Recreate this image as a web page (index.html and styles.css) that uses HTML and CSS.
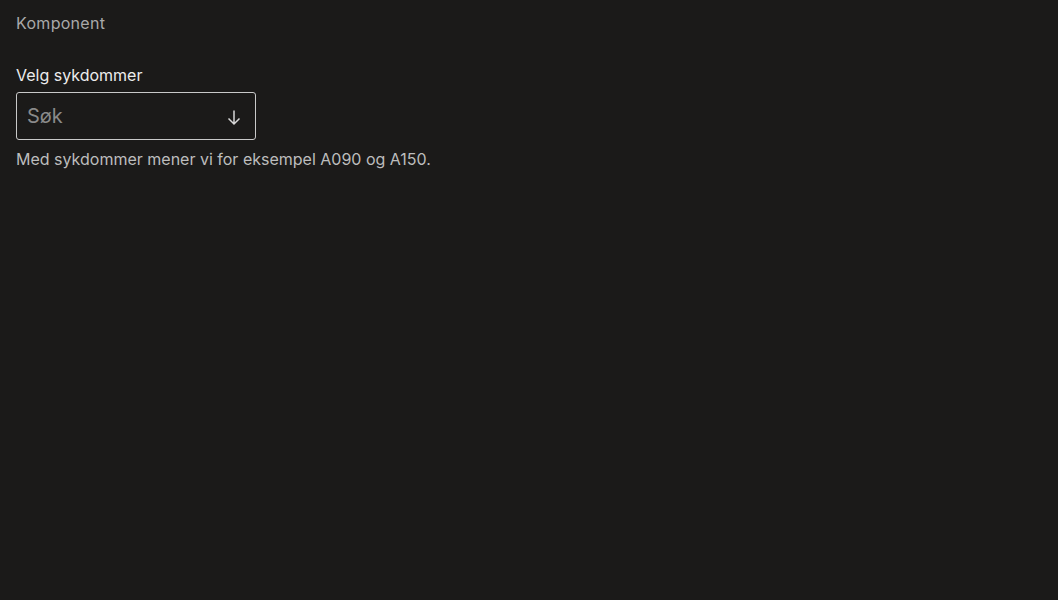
FILE: index.html
```html
<!DOCTYPE html>
<html lang="no">
<head>
<meta charset="utf-8">
<link rel="stylesheet" href="styles.css">
</head>
<body>
<main class="page">
  <div class="title">Komponent</div>
  <div class="field">
    <label class="label" for="sok">Velg sykdommer</label>
    <div class="combo">
      <input id="sok" class="input" type="text" placeholder="Søk">
      <svg class="arrow" width="18" height="18" viewBox="0 0 18 18" fill="none" stroke="currentColor" stroke-width="1.5">
        <path d="M9 2.5V16M3.5 10.5L9 16L14.5 10.5"/>
      </svg>
    </div>
    <div class="help">Med sykdommer mener vi for eksempel A090 og A150.</div>
  </div>
</main>
</body>
</html>
```
FILE: styles.css
```css
html, body {
  margin: 0;
  background: #1b1a19;
  height: 100%;
}
body {
  font-family: Inter, "Liberation Sans", sans-serif;
  color: #e9e9e9;
}
.page {
  padding: 12px 16px;
}
.title {
  font-size: 16px;
  line-height: 22px;
  color: #a9a9a9;
  letter-spacing: 0.3px;
}
.field {
  margin-top: 30px;
  display: flex;
  flex-direction: column;
}
.label {
  font-size: 16px;
  line-height: 22px;
  color: #ececec;
  margin-bottom: 6px;
}
.combo {
  width: 240px;
  height: 48px;
  box-sizing: border-box;
  border: 1px solid #c9c9c9;
  border-radius: 3px;
  display: flex;
  align-items: center;
}
.input {
  flex: 1;
  min-width: 0;
  background: transparent;
  border: none;
  outline: none;
  color: #e9e9e9;
  font-family: inherit;
  font-size: 20px;
  padding: 0 10px;
  height: 100%;
}
.input::placeholder {
  color: #8a8a8a;
}
.arrow {
  color: #d8d8d8;
  margin-right: 12px;
  margin-top: 2px;
  flex: none;
}
.help {
  margin-top: 8px;
  font-size: 16px;
  line-height: 22px;
  color: #bdbdbd;
}
```
